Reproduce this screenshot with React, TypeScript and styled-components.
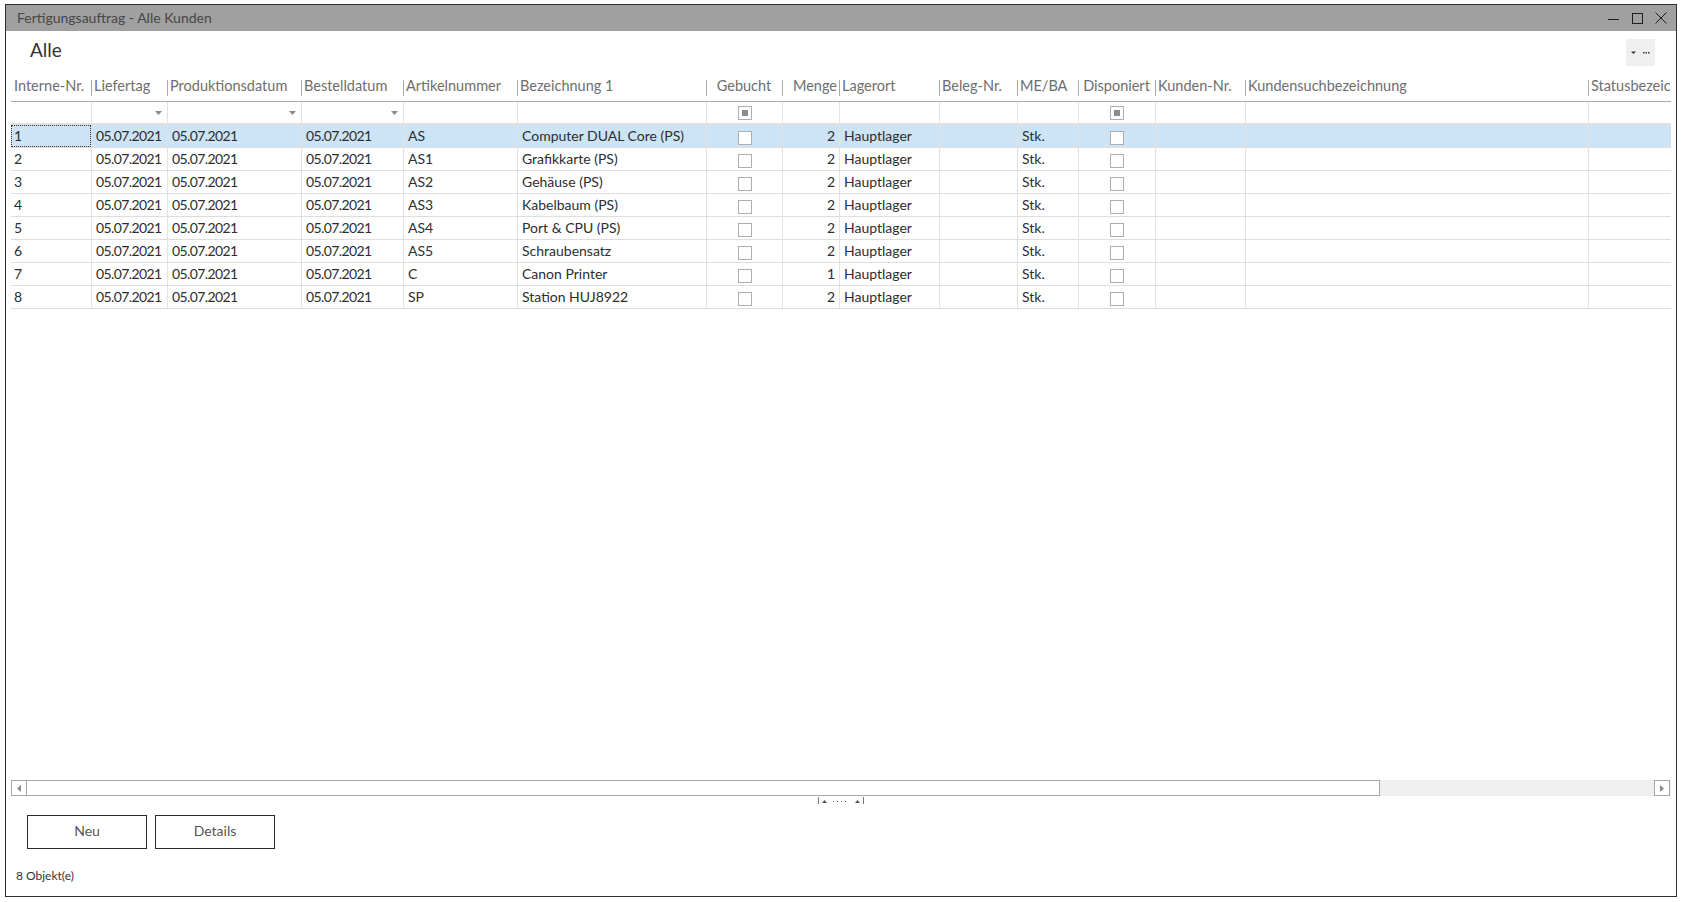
import styled, { createGlobalStyle } from 'styled-components'

const GlobalStyle = createGlobalStyle`
    html, body {
        margin: 0;
        padding: 0;
        background: #fff;
    }
    body {
        font-family: Lato, 'Open Sans', sans-serif;
    }
`

type Align = 'left' | 'center' | 'right'

interface Column {
    key: string
    title: string
    width: number
    align?: Align
    filter?: 'dropdown' | 'check'
    numeric?: boolean
}

const columns: Column[] = [
    { key: 'nr', title: 'Interne-Nr.', width: 80 },
    { key: 'liefertag', title: 'Liefertag', width: 76, filter: 'dropdown', numeric: true },
    { key: 'prod', title: 'Produktionsdatum', width: 134, filter: 'dropdown', numeric: true },
    { key: 'bestell', title: 'Bestelldatum', width: 102, filter: 'dropdown', numeric: true },
    { key: 'artikel', title: 'Artikelnummer', width: 114 },
    { key: 'bez', title: 'Bezeichnung 1', width: 189 },
    { key: 'gebucht', title: 'Gebucht', width: 76, align: 'center', filter: 'check' },
    { key: 'menge', title: 'Menge', width: 57, align: 'right' },
    { key: 'lager', title: 'Lagerort', width: 100 },
    { key: 'beleg', title: 'Beleg-Nr.', width: 78 },
    { key: 'me', title: 'ME/BA', width: 61 },
    { key: 'dispo', title: 'Disponiert', width: 77, align: 'center', filter: 'check' },
    { key: 'kunde', title: 'Kunden-Nr.', width: 90 },
    { key: 'suche', title: 'Kundensuchbezeichnung', width: 343 },
    { key: 'status', title: 'Statusbezeichnung', width: 82 },
]

const gridColumns = columns.map(c => c.width + 'px').join(' ')

const rows = [
    { nr: '1', art: 'AS', bez: 'Computer DUAL Core (PS)', menge: 2 },
    { nr: '2', art: 'AS1', bez: 'Grafikkarte (PS)', menge: 2 },
    { nr: '3', art: 'AS2', bez: 'Gehäuse (PS)', menge: 2 },
    { nr: '4', art: 'AS3', bez: 'Kabelbaum (PS)', menge: 2 },
    { nr: '5', art: 'AS4', bez: 'Port & CPU (PS)', menge: 2 },
    { nr: '6', art: 'AS5', bez: 'Schraubensatz', menge: 2 },
    { nr: '7', art: 'C', bez: 'Canon Printer', menge: 1 },
    { nr: '8', art: 'SP', bez: 'Station HUJ8922', menge: 2 },
]

const Window = styled.div`
    box-sizing: border-box;
    margin: 4px 0 0 5px;
    width: 1672px;
    height: 893px;
    border: 1px solid #2e2e2e;
    display: flex;
    flex-direction: column;
    background: #fff;
`

const TitleBar = styled.div`
    height: 26px;
    flex-shrink: 0;
    background: #a0a0a0;
    display: flex;
    align-items: center;
    padding-left: 11px;
    padding-right: 3px;
`

const TitleText = styled.div`
    flex: 1;
    font-size: 14px;
    color: #474747;
    padding-bottom: 1px;
`

const WinButton = styled.div`
    width: 24px;
    height: 26px;
    display: flex;
    align-items: center;
    justify-content: center;
`

const Content = styled.div`
    flex: 1;
    display: flex;
    flex-direction: column;
    padding: 0 5px;
    min-height: 0;
`

const TopBar = styled.div`
    height: 46px;
    flex-shrink: 0;
    box-sizing: border-box;
    display: flex;
    justify-content: space-between;
    align-items: flex-start;
    padding: 6px 16px 0 19px;
`

const ViewTitle = styled.div`
    font-size: 19px;
    line-height: 26px;
    color: #333;
`

const MenuButton = styled.div`
    margin-top: 2px;
    width: 29px;
    height: 27px;
    background: #efefef;
    display: flex;
    align-items: center;
    justify-content: center;
`

const Grid = styled.div`
    flex: 1;
    display: flex;
    flex-direction: column;
    min-height: 0;
`

const HeaderRow = styled.div`
    display: grid;
    grid-template-columns: ${gridColumns};
    height: 25px;
    box-sizing: border-box;
    border-bottom: 1px solid #ababab;
`

const HeaderCell = styled.div<{ $align?: Align; $first?: boolean }>`
    position: relative;
    box-sizing: border-box;
    padding: 0 ${p => (p.$align === 'right' ? '2px' : '3px')} 0 3px;
    font-size: 14.5px;
    line-height: 18px;
    color: #6e6e6e;
    text-align: ${p => p.$align || 'left'};
    white-space: nowrap;
    overflow: hidden;
    ${p =>
        !p.$first &&
        `&::before {
            content: '';
            position: absolute;
            left: 0;
            top: 3px;
            bottom: 5px;
            border-left: 1px solid #a9a9a9;
        }`}
`

const FilterRow = styled.div`
    display: grid;
    grid-template-columns: ${gridColumns};
    height: 23px;
    box-sizing: border-box;
    border-bottom: 2px solid #e0e0e0;
`

const FilterCell = styled.div<{ $align?: Align; $first?: boolean }>`
    box-sizing: border-box;
    display: flex;
    align-items: center;
    justify-content: ${p => (p.$align === 'center' ? 'center' : 'flex-end')};
    padding-right: ${p => (p.$align === 'center' ? '0' : '5px')};
    border-left: ${p => (p.$first ? 'none' : '1px solid #e2e2e2')};
`

const DataRow = styled.div<{ $selected?: boolean }>`
    display: grid;
    grid-template-columns: ${gridColumns};
    height: 23px;
    box-sizing: border-box;
    border-bottom: 1px solid #dedede;
    background: ${p => (p.$selected ? '#cce4f6' : '#fff')};
`

const DataCell = styled.div<{ $align?: Align; $first?: boolean; $focused?: boolean; $numeric?: boolean }>`
    box-sizing: border-box;
    display: flex;
    align-items: center;
    justify-content: ${p =>
        p.$align === 'center' ? 'center' : p.$align === 'right' ? 'flex-end' : 'flex-start'};
    padding: 0 4px 2px ${p => (p.$first ? '3px' : '4px')};
    font-size: 14px;
    letter-spacing: ${p => (p.$numeric ? '-0.6px' : 'normal')};
    color: #2d2d2d;
    white-space: nowrap;
    overflow: hidden;
    border-left: ${p => (p.$first ? 'none' : '1px solid #e2e2e2')};
    outline: ${p => (p.$focused ? '1px dotted #333' : 'none')};
    outline-offset: -1px;
`

const CheckBox = styled.span`
    display: inline-block;
    box-sizing: border-box;
    width: 14px;
    height: 14px;
    margin-top: 5px;
    border: 1px solid #adadad;
    background: #fff;
`

const FilterCheck = styled.span`
    display: flex;
    align-items: center;
    justify-content: center;
    box-sizing: border-box;
    width: 14px;
    height: 14px;
    border: 1px solid #adadad;
    background: #fff;
    &::after {
        content: '';
        width: 6px;
        height: 6px;
        background: #8c8c8c;
    }
`

const GridSpacer = styled.div`
    flex: 1;
`

const ScrollBar = styled.div`
    height: 16px;
    flex-shrink: 0;
    display: flex;
    background: #efefef;
`

const ScrollArrow = styled.div`
    width: 16px;
    height: 16px;
    box-sizing: border-box;
    border: 1px solid #a8a8a8;
    background: #fff;
    display: flex;
    align-items: center;
    justify-content: center;
`

const ScrollThumb = styled.div`
    width: 1353px;
    height: 16px;
    box-sizing: border-box;
    border: 1px solid #a8a8a8;
    border-left: none;
    background: #fff;
`

const ScrollTrack = styled.div`
    flex: 1;
`

const ScrollEnd = styled.div`
    width: 1px;
`

const GripRow = styled.div`
    height: 13px;
    flex-shrink: 0;
    display: flex;
    justify-content: center;
    align-items: flex-start;
    padding-top: 1px;
    box-sizing: border-box;
`

const ButtonRow = styled.div`
    display: flex;
    gap: 8px;
    margin-top: 6px;
    padding-left: 16px;
    flex-shrink: 0;
`

const ActionButton = styled.button`
    width: 120px;
    height: 34px;
    box-sizing: border-box;
    border: 1px solid #2a2a2a;
    background: #fff;
    font-family: Lato, 'Open Sans', sans-serif;
    font-size: 14px;
    color: #555;
    padding: 0 0 4px 0;
    cursor: pointer;
`

const StatusBar = styled.div`
    height: 47px;
    flex-shrink: 0;
    box-sizing: border-box;
    padding: 19px 0 0 5px;
    font-size: 12px;
    line-height: 16px;
    color: #333;
`

const DropArrow = () => (
    <svg width="7" height="4" viewBox="0 0 7 4">
        <path d="M0 0 H7 L3.5 4 Z" fill="#8a8a8a" />
    </svg>
)

const cellValue = (key: string, row: typeof rows[number]) => {
    switch (key) {
        case 'nr':
            return row.nr
        case 'liefertag':
        case 'prod':
        case 'bestell':
            return '05.07.2021'
        case 'artikel':
            return row.art
        case 'bez':
            return row.bez
        case 'menge':
            return row.menge
        case 'lager':
            return 'Hauptlager'
        case 'me':
            return 'Stk.'
        case 'gebucht':
        case 'dispo':
            return <CheckBox />
        default:
            return ''
    }
}

export default function App() {
    return (
        <>
            <GlobalStyle />
            <Window>
                <TitleBar>
                    <TitleText>Fertigungsauftrag - Alle Kunden</TitleText>
                    <WinButton>
                        <svg width="11" height="11" viewBox="0 0 11 11">
                            <path d="M0 6.5 H11" stroke="#1e1e1e" strokeWidth="1" />
                        </svg>
                    </WinButton>
                    <WinButton>
                        <svg width="11" height="11" viewBox="0 0 11 11">
                            <rect x="0.5" y="0.5" width="10" height="10" fill="none" stroke="#1e1e1e" />
                        </svg>
                    </WinButton>
                    <WinButton>
                        <svg width="12" height="12" viewBox="0 0 12 12">
                            <path d="M0.5 0.5 L11.5 11.5 M11.5 0.5 L0.5 11.5" stroke="#1e1e1e" strokeWidth="1" />
                        </svg>
                    </WinButton>
                </TitleBar>
                <Content>
                    <TopBar>
                        <ViewTitle>Alle</ViewTitle>
                        <MenuButton>
                            <svg width="22" height="6" viewBox="0 0 22 6">
                                <path d="M1 1.5 H6 L3.5 4 Z" fill="#333" />
                                <rect x="13" y="2" width="1.5" height="1.5" fill="#333" />
                                <rect x="15.5" y="2" width="1.5" height="1.5" fill="#333" />
                                <rect x="18" y="2" width="1.5" height="1.5" fill="#333" />
                            </svg>
                        </MenuButton>
                    </TopBar>
                    <Grid>
                        <HeaderRow>
                            {columns.map((c, i) => (
                                <HeaderCell key={c.key} $align={c.align} $first={i === 0}>
                                    {c.title}
                                </HeaderCell>
                            ))}
                        </HeaderRow>
                        <FilterRow>
                            {columns.map((c, i) => (
                                <FilterCell key={c.key} $align={c.align} $first={i === 0}>
                                    {c.filter === 'dropdown' && <DropArrow />}
                                    {c.filter === 'check' && <FilterCheck />}
                                </FilterCell>
                            ))}
                        </FilterRow>
                        {rows.map((r, ri) => (
                            <DataRow key={r.nr} $selected={ri === 0}>
                                {columns.map((c, i) => (
                                    <DataCell
                                        key={c.key}
                                        $align={c.align}
                                        $first={i === 0}
                                        $numeric={c.numeric}
                                        $focused={ri === 0 && i === 0}
                                    >
                                        {cellValue(c.key, r)}
                                    </DataCell>
                                ))}
                            </DataRow>
                        ))}
                        <GridSpacer />
                    </Grid>
                    <ScrollBar>
                        <ScrollArrow>
                            <svg width="4" height="7" viewBox="0 0 4 7">
                                <path d="M4 0 V7 L0 3.5 Z" fill="#8a8a8a" />
                            </svg>
                        </ScrollArrow>
                        <ScrollThumb />
                        <ScrollTrack />
                        <ScrollArrow>
                            <svg width="4" height="7" viewBox="0 0 4 7">
                                <path d="M0 0 V7 L4 3.5 Z" fill="#8a8a8a" />
                            </svg>
                        </ScrollArrow>
                        <ScrollEnd />
                    </ScrollBar>
                    <GripRow>
                        <svg width="46" height="7" viewBox="0 0 46 7">
                            <path d="M0.5 0 V7 M45.5 0 V7" stroke="#777" strokeWidth="1" />
                            <path d="M4 6 L6.5 3 L9 6 Z" fill="#555" />
                            <path d="M37 6 L39.5 3 L42 6 Z" fill="#555" />
                            <rect x="15" y="4" width="1" height="1" fill="#666" />
                            <rect x="19" y="4" width="1" height="1" fill="#666" />
                            <rect x="23" y="4" width="1" height="1" fill="#666" />
                            <rect x="27" y="4" width="1" height="1" fill="#666" />
                        </svg>
                    </GripRow>
                    <ButtonRow>
                        <ActionButton>Neu</ActionButton>
                        <ActionButton>Details</ActionButton>
                    </ButtonRow>
                    <StatusBar>8 Objekt(e)</StatusBar>
                </Content>
            </Window>
        </>
    )
}
